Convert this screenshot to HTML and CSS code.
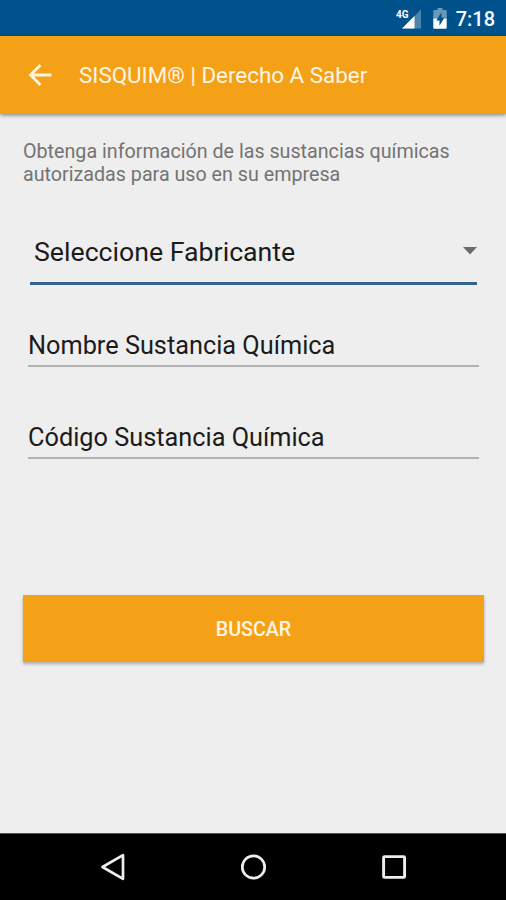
FILE: index.html
```html
<!DOCTYPE html>
<html lang="es">
<head>
<meta charset="utf-8">
<title>SISQUIM® | Derecho A Saber</title>
<link rel="stylesheet" href="styles.css">
</head>
<body>
<div class="screen">
  <header class="status">
    <svg class="signal" width="26" height="22" viewBox="0 0 26 22">
      <path d="M6 20.500 25 1.500V20.500Z" fill="#4d86ab"/>
      <path d="M0 0H13.500V11.500H0Z" fill="#00528c"/>
      <path d="M6 20.500 18.500 8V20.500Z" fill="#fff"/>
      <text class="network" x="0" y="10" textLength="12.500" lengthAdjust="spacingAndGlyphs">4G</text>
    </svg>
    <svg class="battery" width="14" height="21" viewBox="0 0 14 20" preserveAspectRatio="none">
      <path d="M4.500 0h5v2H12.500q1.200 0 1.200 1.200V10H.3V3.200Q.3 2 1.500 2h3Z" fill="#6999b9"/>
      <path d="M.3 10h13.400v8.500q0 1.200-1.200 1.200h-11Q.3 19.700.3 18.500Z" fill="#fff"/>
      <path d="M8.500 4 3.300 11.800h3.200v5.200l4.800-7.700H8.500Z" fill="#00528c"/>
    </svg>
    <span class="clock">7:18</span>
  </header>
  <div class="appbar">
    <svg class="back" width="24" height="24" viewBox="0 0 24 24"><path d="M23.500 12H3M12.500 2 2.500 12l10 10" fill="none" stroke="#fff5e3" stroke-width="2.800"/></svg>
    <h1 class="title">SISQUIM® | Derecho A Saber</h1>
  </div>
  <main class="content">
    <p class="intro">Obtenga información de las sustancias químicas<br>autorizadas para uso en su empresa</p>
    <div class="spinner">
      <span class="spinner-text">Seleccione Fabricante</span>
      <svg class="caret" width="14" height="8" viewBox="0 0 14 8"><path d="M0 0H14L7 7.500Z" fill="#6b6b6b"/></svg>
    </div>
    <div class="field name"><span class="name-text">Nombre Sustancia Química</span></div>
    <div class="field code"><span class="code-text">Código Sustancia Química</span></div>
    <button class="search">BUSCAR</button>
  </main>
  <nav class="navbar">
    <svg width="28" height="30" viewBox="0 0 28 30"><path d="M24 3.200V26.800L3.500 15Z" fill="none" stroke="#eee" stroke-width="2.700" stroke-linejoin="round"/></svg>
    <svg width="28" height="30" viewBox="0 0 28 30"><circle cx="13.500" cy="15" r="11.200" fill="none" stroke="#eee" stroke-width="2.700"/></svg>
    <svg width="28" height="30" viewBox="0 0 28 30"><rect x="3.600" y="4.600" width="21" height="20.800" rx="1" fill="none" stroke="#eee" stroke-width="2.900"/></svg>
  </nav>
</div>
</body>
</html>
```
FILE: styles.css
```css
* { box-sizing: border-box; }
body { margin: 0; font-family: Roboto, "Liberation Sans", sans-serif; }
.screen { width: 506px; height: 900px; display: flex; flex-direction: column; background: #eee; overflow: hidden; }
.status { height: 36px; flex: none; display: flex; align-items: center; justify-content: flex-end; padding-right: 11px; background: #00528c; color: #fff; }
.signal { margin: 1px 11px 0 0; }
.battery { margin-right: 9px; }
.network { font-size: 11.500px; font-weight: 700; fill: #fff; }
.clock { font-size: 20px; line-height: 36px; font-weight: 500; padding-top: 2px; }
.appbar { height: 78px; flex: none; display: flex; align-items: center; padding-left: 28px; background: #f5a118; box-shadow: 0 1px 4px rgba(0,0,0,.5); }
.title { margin: 0 0 0 27px; font-size: 22.400px; font-weight: 400; line-height: 30px; color: #fff5e3; white-space: nowrap; }
.content { flex: 1; display: flex; flex-direction: column; padding: 26px 22px 0 23px; }
.intro { margin: 0; font-size: 19.700px; line-height: 23px; color: #737373; white-space: nowrap; }
.spinner { height: 66px; margin: 33px 7px 0; padding: 3px 0 0 4px; display: flex; align-items: center; justify-content: space-between; border-bottom: 3px solid #34638d; font-size: 26.700px; color: #1b1b1b; }
.caret { margin-bottom: 2px; }
.field { height: 46px; margin: 0 5px; border-bottom: 2px solid #b1b1b1; font-size: 25.300px; line-height: 50px; color: #1b1b1b; }
.name { margin-top: 36px; }
.code { margin-top: 46px; }
.search { height: 67px; margin-top: 136px; border: 0; padding: 2px 0 0; background: #f5a118; color: #fff5e3; font: 500 19.700px/30px Roboto, sans-serif; box-shadow: 0 2px 3px rgba(0,0,0,.28); }
.navbar { height: 67px; flex: none; display: flex; align-items: center; justify-content: space-between; padding: 0 98px 0 99px; background: #000; border-top: 1px solid #555; }
```
